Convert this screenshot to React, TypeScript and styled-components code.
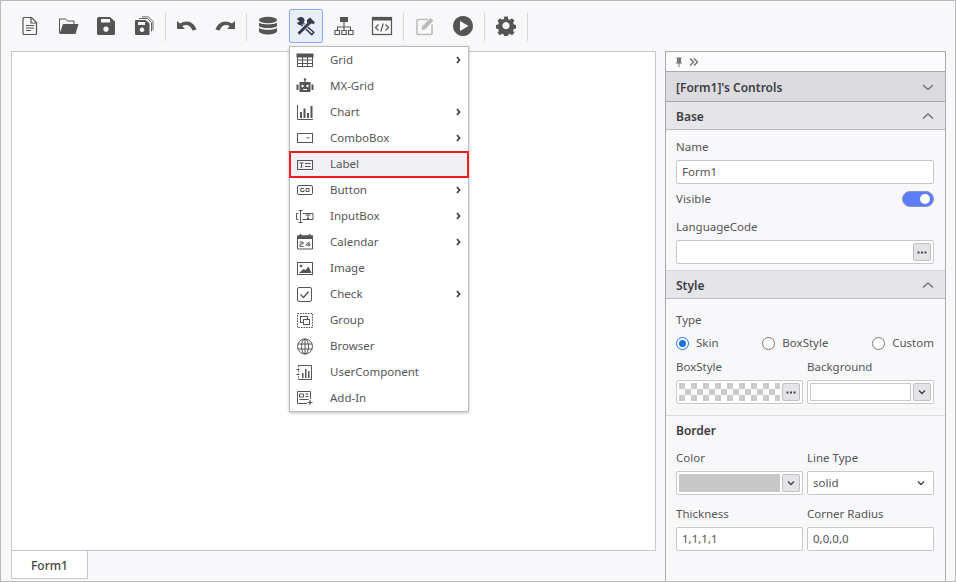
import React from "react";
import styled, { createGlobalStyle } from "styled-components";

const GlobalStyle = createGlobalStyle`
  html, body {
    margin: 0;
    padding: 0;
    background: #f8f8fb;
    font-family: "Noto Sans", "Open Sans", Arial, sans-serif;
  }
  * { box-sizing: border-box; }
`;

const Page = styled.div`
  width: 956px;
  height: 582px;
  border: 1px solid #bbbbbb;
  background: #f8f8fb;
  display: flex;
  flex-direction: column;
  overflow: hidden;
`;

const Toolbar = styled.div`
  height: 50px;
  flex: none;
  padding: 8px 0 0 12px;
  display: flex;
  align-items: flex-start;
  gap: 4px;
`;

const ToolButton = styled.div<{ $active?: boolean }>`
  position: relative;
  width: 34px;
  height: 34px;
  flex: none;
  display: flex;
  align-items: center;
  justify-content: center;
  border-radius: 2px;
  border: 1px solid ${({ $active }) => ($active ? "#8fa8f5" : "transparent")};
  background: ${({ $active }) => ($active ? "#e9eefb" : "transparent")};
`;

const ToolSeparator = styled.div`
  width: 1px;
  height: 28px;
  margin-top: 4px;
  flex: none;
  background: #d8d8d8;
`;

const Workspace = styled.div`
  flex: 1;
  min-height: 0;
  padding-left: 10px;
  display: flex;
  gap: 9px;
`;

const DesignColumn = styled.div`
  width: 645px;
  flex: none;
  display: flex;
  flex-direction: column;
`;

const Canvas = styled.div`
  height: 500px;
  background: #ffffff;
  border: 1px solid #c8c8c8;
`;

const FormTab = styled.div`
  width: 77px;
  height: 28px;
  padding-top: 2px;
  background: #ffffff;
  border: 1px solid #c8c8c8;
  border-top: none;
  display: flex;
  align-items: center;
  justify-content: center;
  font-size: 12px;
  font-weight: 500;
  color: #444444;
`;

const Menu = styled.div`
  position: absolute;
  z-index: 5;
  top: 36px;
  left: -1px;
  width: 180px;
  height: 366px;
  background: #ffffff;
  border: 1px solid #bdbdbd;
  box-shadow: 0 1px 3px rgba(0, 0, 0, 0.25);
`;

const MenuItem = styled.div<{ $selected?: boolean }>`
  height: ${({ $selected }) => ($selected ? "27px" : "26px")};
  margin: ${({ $selected }) => ($selected ? "0 -1px -1px" : "0")};
  padding: 0 ${({ $selected }) => ($selected ? "4px 0 5px" : "5px 0 6px")};
  display: flex;
  align-items: center;
  border: ${({ $selected }) => ($selected ? "2px solid #ed1c24" : "none")};
  background: ${({ $selected }) => ($selected ? "#f0f0f5" : "transparent")};
  position: relative;
  font-size: 11.5px;
  line-height: 15px;
  color: #555555;
`;

const MenuIcon = styled.span`
  width: 18px;
  height: 18px;
  flex: none;
  margin-right: 16px;
  display: flex;
`;

const MenuLabel = styled.span`
  flex: 1;
  padding-bottom: 2px;
`;

const Panel = styled.div`
  width: 281px;
  flex: none;
  background: #f8f8fb;
  border: 1px solid #aaaaaa;
  border-bottom: none;
`;

const PinBar = styled.div`
  height: 19px;
  padding-left: 8px;
  display: flex;
  align-items: center;
  gap: 5px;
  background: #fbfbfd;
`;

const SectionHeader = styled.div<{ $dark?: boolean; $flush?: boolean }>`
  height: ${({ $dark }) => ($dark ? "31px" : "29px")};
  padding: 0 10px;
  display: flex;
  align-items: center;
  justify-content: space-between;
  background: ${({ $dark }) => ($dark ? "#dcdce0" : "#e6e6ea")};
  border-top: 1px solid #aaaaaa;
  border-bottom: 1px solid ${({ $dark }) => ($dark ? "#aaaaaa" : "#bbbbbb")};
  margin-top: ${({ $dark, $flush }) => ($dark || $flush ? "0" : "-1px")};
  ${({ $flush }) => ($flush ? "border-top-color: #d8d8dc;" : "")}
`;

const HeaderTitle = styled.span`
  padding-top: 2px;
  font-size: 12px;
  font-weight: 600;
  color: #3c3c44;
`;

const SectionBody = styled.div<{ $top: number; $bottom: number; $divided?: boolean }>`
  padding: ${({ $top, $bottom }) => `${$top}px 11px ${$bottom}px 10px`};
  border-bottom: ${({ $divided }) => ($divided ? "1px solid #dddddd" : "none")};
`;

const FieldLabel = styled.div`
  height: 22px;
  line-height: 17px;
  font-size: 11.5px;
  color: #555555;
`;

const SubTitle = styled.div`
  height: 27px;
  line-height: 18px;
  font-size: 12px;
  font-weight: 600;
  color: #3c3c44;
`;

const TextBox = styled.div`
  height: 24px;
  padding: 0 2px 0 5px;
  display: flex;
  align-items: center;
  justify-content: space-between;
  background: #ffffff;
  border: 1px solid #c8c8c8;
  border-radius: 2px;
`;

const BoxValue = styled.span`
  padding-bottom: 2px;
  font-size: 11.5px;
  line-height: 15px;
  color: #555555;
`;

const SelectBox = styled(TextBox)`
  padding-right: 7px;
`;

const SquareButton = styled.div`
  width: 18px;
  height: 18px;
  flex: none;
  display: flex;
  align-items: center;
  justify-content: center;
  background: #e4e4e8;
  border: 1px solid #c0c0c0;
  border-radius: 2px;
`;

const VisibleRow = styled.div`
  height: 16px;
  margin: 7px 0 11px;
  display: flex;
  align-items: center;
  justify-content: space-between;
`;

const RowText = styled.span`
  padding-bottom: 2px;
  font-size: 11.5px;
  line-height: 15px;
  color: #555555;
`;

const Toggle = styled.div`
  width: 32px;
  height: 16px;
  padding-right: 3px;
  display: flex;
  align-items: center;
  justify-content: flex-end;
  background: #5c7cfa;
  border-radius: 8px;
  border: 1px solid #8a94b8;
`;

const ToggleKnob = styled.div`
  width: 10px;
  height: 10px;
  border-radius: 50%;
  background: #ffffff;
`;

const RadioRow = styled.div`
  height: 16px;
  margin: 2px 0 7px;
  display: flex;
  align-items: center;
  justify-content: space-between;
`;

const RadioOption = styled.div`
  display: flex;
  align-items: center;
  gap: 7px;
`;

const RadioMark = styled.div<{ $checked?: boolean }>`
  width: 13px;
  height: 13px;
  border-radius: 50%;
  background: #ffffff;
  border: 1px solid ${({ $checked }) => ($checked ? "#1a73e8" : "#767676")};
  display: flex;
  align-items: center;
  justify-content: center;
  &::after {
    content: "";
    display: ${({ $checked }) => ($checked ? "block" : "none")};
    width: 7px;
    height: 7px;
    border-radius: 50%;
    background: #1a73e8;
  }
`;

const TwoColumns = styled.div<{ $gapTop?: number }>`
  display: grid;
  grid-template-columns: 127px 127px;
  column-gap: 4px;
  margin-top: ${({ $gapTop }) => $gapTop ?? 0}px;
`;

const PickerBox = styled.div`
  height: 24px;
  padding: 2px;
  display: flex;
  align-items: center;
  gap: 2px;
  background: #ffffff;
  border: 1px solid #c8c8c8;
  border-radius: 2px;
`;

const Checker = styled.div`
  flex: 1;
  height: 18px;
  background-color: #ffffff;
  background-image: conic-gradient(
    #cccccc 25%,
    #ffffff 25% 50%,
    #cccccc 50% 75%,
    #ffffff 75%
  );
  background-size: 12px 12px;
  background-position: 6px 0;
`;

const ColorField = styled.div<{ $color: string; $outlined?: boolean }>`
  flex: 1;
  height: 18px;
  background: ${({ $color }) => $color};
  border: ${({ $outlined }) => ($outlined ? "1px solid #c8c8c8" : "none")};
`;

const Icon = styled.svg<{ $color?: string }>`
  display: block;
  flex: none;
  color: ${({ $color }) => $color ?? "#555555"};
`;

type IconProps = { size?: number; color?: string; children?: React.ReactNode; box?: number };

const Svg = ({ size = 20, color, box = 20, children }: IconProps) => (
  <Icon $color={color} width={size} height={size} viewBox={`0 0 ${box} ${box}`}>
    {children}
  </Icon>
);

// toolbar icons
const NewIcon = () => (
  <Svg>
    <path d="M3 2.500 a1 1 0 0 1 1-1 h7.500 l5 5 v11 a1 1 0 0 1-1 1 h-11.500 a1 1 0 0 1-1-1z" fill="none" stroke="currentColor" strokeWidth="1.200" />
    <path d="M11 1.500 v5.500 h5.500" fill="none" stroke="currentColor" strokeWidth="1.200" />
    <path d="M6 9.500h8M6 12h8M6 14.500h5" stroke="currentColor" strokeWidth="1.200" />
  </Svg>
);
const OpenIcon = () => (
  <Svg size={22} box={22}>
    <path d="M2.500 18 V4 h6 l2 2 h6.500 v3" fill="none" stroke="currentColor" strokeWidth="1" />
    <path d="M6 9 H21.500 L18.500 19 H2.500z" fill="currentColor" />
  </Svg>
);
const SaveIcon = () => (
  <Svg>
    <path fillRule="evenodd" fill="currentColor" d="M2.500 1 H14 L19 5.500 V17.500 a1.500 1.500 0 0 1-1.500 1.500 h-15 a1.500 1.500 0 0 1-1.500-1.500 v-15 a1.500 1.500 0 0 1 1.500-1.500z M5 3 v3.500 h9 V3z M10 10.500 a2.700 2.700 0 1 0 .01 0z" />
  </Svg>
);
const SaveAllIcon = () => (
  <Svg>
    <path fillRule="evenodd" fill="currentColor" d="M2 4 H11.500 L15.500 7.500 V18 a1 1 0 0 1-1 1 h-12.500 a1 1 0 0 1-1-1 v-13 a1 1 0 0 1 1-1z M4 6 v3 h7 V6z M8 11.500 a2.300 2.300 0 1 0 .01 0z" />
    <path d="M5 2.500 h8.500 l4 4 v9 M8 .9 h6.500 l4.500 4.500 v9" fill="none" stroke="currentColor" strokeWidth=".9" />
  </Svg>
);
const UndoIcon = () => (
  <Svg size={22} box={22}>
    <path d="M1 6 V14 H9 L6.300 11.300 C9.500 8.800 14 9.500 16.500 15.500 L20.500 14.500 C18 7 11 4 4 8.500 Z" fill="currentColor" />
  </Svg>
);
const RedoIcon = () => (
  <Svg size={22} box={22}>
    <path d="M21 6 V14 H13 L15.700 11.300 C12.500 8.800 8 9.500 5.500 15.500 L1.500 14.500 C4 7 11 4 18 8.500 Z" fill="currentColor" />
  </Svg>
);
const DatabaseIcon = () => (
  <Svg>
    <ellipse cx="10" cy="4" rx="9" ry="3.200" fill="currentColor" />
    <path d="M1 6.500 C3 9 17 9 19 6.500 V10 C17 12.800 3 12.800 1 10z" fill="currentColor" />
    <path d="M1 11.800 C3 14.500 17 14.500 19 11.800 V15.500 C17 19.500 3 19.500 1 15.500z" fill="currentColor" />
  </Svg>
);
const ToolsIcon = () => (
  <Svg color="#333a4a">
    {/* wrench head upper left, hollow handle to lower right */}
    <path d="M5 1 C3 1 1.500 2 1 3.500 L3.500 5 L2 6.800 L.8 6 C1 8.500 3.500 9.500 5.500 9 L7.500 7.500 L8.500 4.500 C8.500 2.500 7 1 5 1z" fill="currentColor" />
    <path d="M7.500 7.500 L17.800 16.300 L15.800 18.600 L5.500 9" fill="none" stroke="currentColor" strokeWidth="1.500" />
    {/* hammer, head upper right and handle to lower left */}
    <path d="M11 4 L14 1.500 L19 6.500 L17.300 8.300 L15.800 7.200 L13.800 9 L11 6.500z" fill="currentColor" />
    <path d="M12 8 L2 17.500" stroke="#e9eefb" strokeWidth="4.400" />
    <path d="M12.500 7.800 L2.500 17.800" stroke="currentColor" strokeWidth="2.800" />
  </Svg>
);
const SitemapIcon = () => (
  <Svg>
    <rect x="6" y="1" width="8" height="5" fill="currentColor" />
    <path d="M10 6v5M3.500 14v-3h13v3M10 11v3" fill="none" stroke="currentColor" strokeWidth="1.100" />
    <path d="M1 14.500h4.500v4H1zM7.800 14.500h4.500v4H7.800zM14.500 14.500H19v4h-4.500z" fill="none" stroke="currentColor" strokeWidth="1.100" />
  </Svg>
);
const CodeIcon = () => (
  <Svg size={22} box={22}>
    <rect x="1.500" y="2.500" width="19" height="17" fill="none" stroke="currentColor" strokeWidth="1.200" />
    <rect x="1" y="2" width="20" height="3.500" fill="currentColor" />
    <path d="M7.500 9.500 L4.500 12.500 L7.500 15.500 M14.500 9.500 L17.500 12.500 L14.500 15.500 M12.300 8.500 L9.700 16.500" fill="none" stroke="currentColor" strokeWidth="1.200" />
  </Svg>
);
const EditIcon = () => (
  <Svg color="#bcbcbc">
    <path d="M13 3.500 H3 a1 1 0 0 0-1 1 v13 a1 1 0 0 0 1 1 h13 a1 1 0 0 0 1-1 V8.500" fill="none" stroke="currentColor" strokeWidth="1.600" />
    <path d="M7 10.500 L15.500 2 L18.500 4.500 L10 13.500 L6.500 14z" fill="currentColor" />
  </Svg>
);
const PlayIcon = () => (
  <Svg size={22} box={22}>
    <path fillRule="evenodd" d="M11 1 a10 10 0 1 0 .01 0z M8 6 L16.500 11 L8 16z" fill="currentColor" />
  </Svg>
);
const GearIcon = () => (
  <Svg>
    <path fillRule="evenodd" fill="currentColor" d="M8.200 .5 h3.600 l.5 2.500 1.800.8 2.200-1.400 2.500 2.500-1.400 2.200.8 1.800 2.300.5 v3.600 l-2.300.5-.8 1.800 1.400 2.200-2.500 2.500-2.200-1.400-1.800.8-.5 2.300 h-3.600 l-.5-2.300-1.800-.8-2.200 1.400-2.500-2.500 1.400-2.200-.8-1.800-2.300-.5 v-3.600 l2.300-.5.8-1.800-1.400-2.200 2.500-2.500 2.200 1.400 1.800-.8z M10 6.300 a3.700 3.700 0 1 0 .01 0z" transform="translate(0.4 0) scale(.96)" />
  </Svg>
);

// menu icons
const M = ({ children }: { children: React.ReactNode }) => (
  <Svg size={18} box={18}>
    <g fill="none" stroke="currentColor" strokeWidth="1">
      {children}
    </g>
  </Svg>
);
const GridGlyph = () => (
  <M>
    <rect x="1.500" y="3.500" width="15" height="12" />
    <rect x="1" y="3" width="16" height="3" fill="currentColor" />
    <path d="M1.500 9h15M1.500 12.500h15M6.500 5v10M11.500 5v10" />
  </M>
);
const RobotGlyph = () => (
  <M>
    <path d="M3.500 5 H14.500 V15 H3.500z" fill="currentColor" stroke="none" />
    <path d="M.5 7.500 H2.500 V13 H.5z M15.500 7.500 H17.500 V13 H15.500z" fill="currentColor" stroke="none" />
    <circle cx="9" cy="2.500" r="1.200" fill="currentColor" stroke="none" />
    <path d="M9 3v2" />
    <circle cx="6.500" cy="9" r="1.200" fill="#fff" stroke="none" />
    <circle cx="11.500" cy="9" r="1.200" fill="#fff" stroke="none" />
    <path d="M7 12.500h4" stroke="#fff" />
  </M>
);
const ChartGlyph = () => (
  <M>
    <path d="M1.500 2v14.500h15.500" />
    <path d="M4 9h2v6H4zM7.500 5.500h2V15h-2zM11 10h2v5h-2zM14.500 3h2v12h-2z" fill="currentColor" stroke="none" />
  </M>
);
const ComboGlyph = () => (
  <M>
    <rect x="1.500" y="4.500" width="15" height="9" />
    <path d="M10.500 8l1.500 1.500 1.500-1.500" />
  </M>
);
const LabelGlyph = () => (
  <M>
    <rect x="1.500" y="4.500" width="15" height="9" />
    <path d="M3.500 7h4M5.500 7v4M4.500 11h2M9 7.500h5.500M9 10.500h5.500" />
  </M>
);
const ButtonGlyph = () => (
  <M>
    <rect x="1.500" y="4.500" width="15" height="9" rx="1.500" />
    <path d="M8 7.500H4.800v3H8V9M10 7.500h3v3h-3z" />
  </M>
);
const InputGlyph = () => (
  <M>
    <path d="M2.500 3.500h4M2.500 15.500h4M4.500 3.500v12M2.500 6.500H.5v6H2.500M6.500 6.500H17v6H6.500" />
    <path d="M9.500 8h5M12 8v3.500M11 11.500h2" />
  </M>
);
const CalendarGlyph = () => (
  <Svg size={18} box={18}>
    <path d="M1.500 3h15v13h-15z" fill="none" stroke="currentColor" />
    <path d="M1 2.500h16V6H1z" fill="currentColor" />
    <path d="M4.500 1v2M13.500 1v2" stroke="currentColor" strokeWidth="1.600" />
    <path d="M3.500 9h3.500v2h-3v2.500h3.500M13 13.500V9l-3.200 3h4.700" fill="none" stroke="currentColor" />
  </Svg>
);
const ImageGlyph = () => (
  <M>
    <rect x="1.500" y="3.500" width="15" height="12" />
    <circle cx="5" cy="7" r="1.300" fill="currentColor" stroke="none" />
    <path d="M3 14 L7.500 10 L9.500 11 L12.500 7.500 L15.500 14z" fill="currentColor" stroke="none" />
  </M>
);
const CheckGlyph = () => (
  <M>
    <rect x="1.500" y="2.500" width="14" height="14" rx="1.500" />
    <path d="M4.500 9.500l3 3 5-6" strokeWidth="1.300" />
  </M>
);
const GroupGlyph = () => (
  <M>
    <rect x="1.500" y="2.500" width="15" height="14" strokeDasharray="1.600 1" />
    <rect x="4.500" y="5.500" width="7" height="6" />
    <rect x="7.500" y="8.500" width="6" height="5" fill="#fff" />
  </M>
);
const GlobeGlyph = () => (
  <M>
    <circle cx="9" cy="9.500" r="7.500" />
    <ellipse cx="9" cy="9.500" rx="3.500" ry="7.500" />
    <path d="M2 7h14M2 12h14M9 2v15" />
  </M>
);
const UserComponentGlyph = () => (
  <M>
    <path d="M2.500 2.500h13v14h-13" />
    <path d="M2.500 2.500v3M2.500 7.500v3M2.500 13v3.500" strokeDasharray="1.500 1" />
    <path d="M.5 6.500h3M.5 11.500h3" />
    <path d="M6 10h1.500v5H6zM9 6h1.500v9H9zM12 8h1.500v7H12z" fill="currentColor" stroke="none" />
  </M>
);
const AddInGlyph = () => (
  <M>
    <path d="M11 14.500H1.500v-12h13V10" />
    <path d="M3.500 5h4v3h-4zM9.500 5h3M9.500 7.500h3M3.500 10.500h9" />
    <path d="M14 11v5M11.500 13.500h5" strokeWidth="1.200" />
  </M>
);

const ChevronRight = () => (
  <Svg size={8} box={8}>
    <path d="M2 1l2.500 3L2 7" fill="none" stroke="#444444" strokeWidth="1.800" />
  </Svg>
);
const Chevron = ({ up }: { up?: boolean }) => (
  <Svg size={14} box={14} color="#777777">
    <path d={up ? "M2 9.500L7 5l5 4.500" : "M2 5l5 4.500L12 5"} fill="none" stroke="currentColor" strokeWidth="1.600" />
  </Svg>
);
const SmallChevron = () => (
  <Svg size={10} box={10} color="#444444">
    <path d="M2 3.500L5 6.500l3-3" fill="none" stroke="currentColor" strokeWidth="1.400" />
  </Svg>
);
const Dots = () => (
  <Svg size={12} box={12} color="#444444">
    <path d="M1.500 5.500h2v2h-2zM5 5.500h2v2H5zM8.500 5.500h2v2h-2z" fill="currentColor" />
  </Svg>
);
const Pin = () => (
  <Svg size={10} box={10} color="#777777">
    <path d="M2.500 .5h5v1L7 2v3l1.500 1.500H5.500V10h-1V6.500H1.500L3 5V2l-.5-.5z" fill="currentColor" />
  </Svg>
);
const DoubleArrow = () => (
  <Svg size={10} box={10} color="#777777">
    <path d="M1 1.500L4.500 5 1 8.500M5 1.500L8.500 5 5 8.500" fill="none" stroke="currentColor" strokeWidth="1.500" />
  </Svg>
);

const menuItems = [
  { label: "Grid", icon: <GridGlyph />, sub: true },
  { label: "MX-Grid", icon: <RobotGlyph /> },
  { label: "Chart", icon: <ChartGlyph />, sub: true },
  { label: "ComboBox", icon: <ComboGlyph />, sub: true },
  { label: "Label", icon: <LabelGlyph />, selected: true },
  { label: "Button", icon: <ButtonGlyph />, sub: true },
  { label: "InputBox", icon: <InputGlyph />, sub: true },
  { label: "Calendar", icon: <CalendarGlyph />, sub: true },
  { label: "Image", icon: <ImageGlyph /> },
  { label: "Check", icon: <CheckGlyph />, sub: true },
  { label: "Group", icon: <GroupGlyph /> },
  { label: "Browser", icon: <GlobeGlyph /> },
  { label: "UserComponent", icon: <UserComponentGlyph /> },
  { label: "Add-In", icon: <AddInGlyph /> },
];

export default function App() {
  return (
    <Page>
      <GlobalStyle />
      <Toolbar>
        <ToolButton><NewIcon /></ToolButton>
        <ToolButton><OpenIcon /></ToolButton>
        <ToolButton><SaveIcon /></ToolButton>
        <ToolButton><SaveAllIcon /></ToolButton>
        <ToolSeparator />
        <ToolButton><UndoIcon /></ToolButton>
        <ToolButton><RedoIcon /></ToolButton>
        <ToolSeparator />
        <ToolButton><DatabaseIcon /></ToolButton>
        <ToolButton $active>
          <ToolsIcon />
          <Menu>
            {menuItems.map((item) => (
              <MenuItem key={item.label} $selected={item.selected}>
                <MenuIcon>{item.icon}</MenuIcon>
                <MenuLabel>{item.label}</MenuLabel>
                {item.sub && <ChevronRight />}
              </MenuItem>
            ))}
          </Menu>
        </ToolButton>
        <ToolButton><SitemapIcon /></ToolButton>
        <ToolButton><CodeIcon /></ToolButton>
        <ToolSeparator />
        <ToolButton><EditIcon /></ToolButton>
        <ToolButton><PlayIcon /></ToolButton>
        <ToolSeparator />
        <ToolButton><GearIcon /></ToolButton>
        <ToolSeparator />
      </Toolbar>
      <Workspace>
        <DesignColumn>
          <Canvas />
          <FormTab>Form1</FormTab>
        </DesignColumn>
        <Panel>
          <PinBar>
            <Pin />
            <DoubleArrow />
          </PinBar>
          <SectionHeader $dark>
            <HeaderTitle>[Form1]'s Controls</HeaderTitle>
            <Chevron />
          </SectionHeader>
          <SectionHeader>
            <HeaderTitle>Base</HeaderTitle>
            <Chevron up />
          </SectionHeader>
          <SectionBody $top={8} $bottom={6}>
            <FieldLabel>Name</FieldLabel>
            <TextBox><BoxValue>Form1</BoxValue></TextBox>
            <VisibleRow>
              <RowText>Visible</RowText>
              <Toggle><ToggleKnob /></Toggle>
            </VisibleRow>
            <FieldLabel>LanguageCode</FieldLabel>
            <TextBox>
              <span />
              <SquareButton><Dots /></SquareButton>
            </TextBox>
          </SectionBody>
          <SectionHeader $flush>
            <HeaderTitle>Style</HeaderTitle>
            <Chevron up />
          </SectionHeader>
          <SectionBody $top={12} $bottom={11} $divided>
            <FieldLabel>Type</FieldLabel>
            <RadioRow>
              <RadioOption><RadioMark $checked /><RowText>Skin</RowText></RadioOption>
              <RadioOption><RadioMark /><RowText>BoxStyle</RowText></RadioOption>
              <RadioOption><RadioMark /><RowText>Custom</RowText></RadioOption>
            </RadioRow>
            <TwoColumns>
              <div>
                <FieldLabel>BoxStyle</FieldLabel>
                <PickerBox>
                  <Checker />
                  <SquareButton><Dots /></SquareButton>
                </PickerBox>
              </div>
              <div>
                <FieldLabel>Background</FieldLabel>
                <PickerBox>
                  <ColorField $color="#ffffff" $outlined />
                  <SquareButton><SmallChevron /></SquareButton>
                </PickerBox>
              </div>
            </TwoColumns>
          </SectionBody>
          <SectionBody $top={6} $bottom={0}>
            <SubTitle>Border</SubTitle>
            <TwoColumns>
              <div>
                <FieldLabel>Color</FieldLabel>
                <PickerBox>
                  <ColorField $color="#c8c8c8" />
                  <SquareButton><SmallChevron /></SquareButton>
                </PickerBox>
              </div>
              <div>
                <FieldLabel>Line Type</FieldLabel>
                <SelectBox>
                  <BoxValue>solid</BoxValue>
                  <SmallChevron />
                </SelectBox>
              </div>
            </TwoColumns>
            <TwoColumns $gapTop={10}>
              <div>
                <FieldLabel>Thickness</FieldLabel>
                <TextBox><BoxValue>1,1,1,1</BoxValue></TextBox>
              </div>
              <div>
                <FieldLabel>Corner Radius</FieldLabel>
                <TextBox><BoxValue>0,0,0,0</BoxValue></TextBox>
              </div>
            </TwoColumns>
          </SectionBody>
        </Panel>
      </Workspace>
    </Page>
  );
}
